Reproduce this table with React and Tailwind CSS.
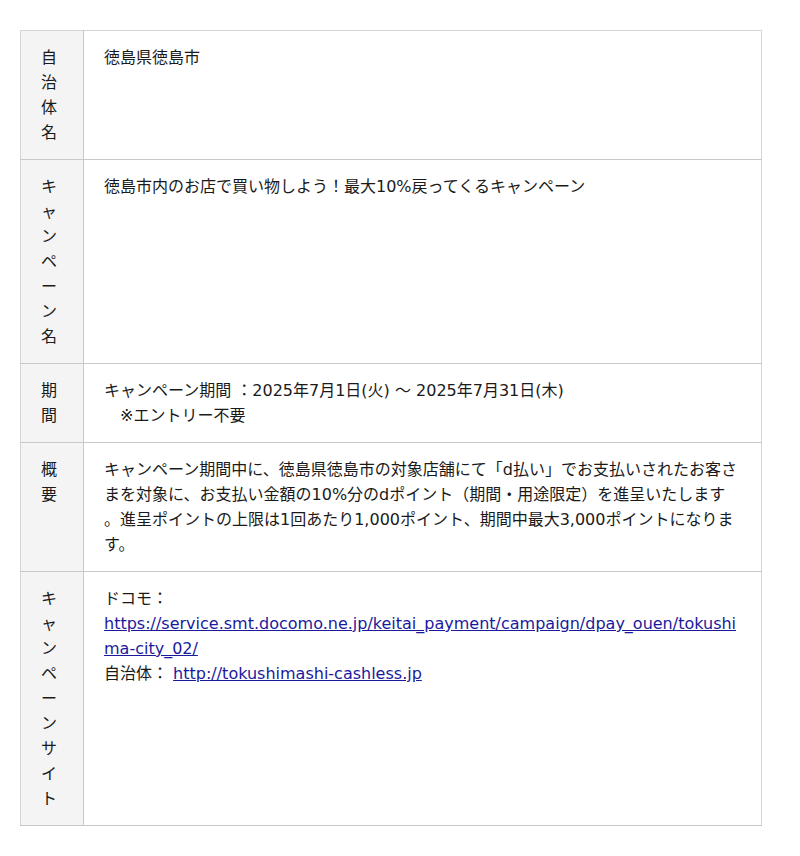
const rows = [
  {
    label: '自治体名',
    body: <>徳島県徳島市</>,
  },
  {
    label: 'キャンペーン名',
    body: <>徳島市内のお店で買い物しよう！最大10%戻ってくるキャンペーン</>,
  },
  {
    label: '期間',
    body: (
      <>
        キャンペーン期間 ：2025年7月1日(火) 〜 2025年7月31日(木)
        <br />
        {'\u3000※エントリー不要'}
      </>
    ),
  },
  {
    label: '概要',
    tight: true,
    body: (
      <>
        キャンペーン期間中に、徳島県徳島市の対象店舗にて「d払い」でお支払いされたお客さまを対象に、お支払い金額の10%分のdポイント（期間・用途限定）を進呈いたします。進呈ポイントの上限は1回あたり1,000ポイント、期間中最大3,000ポイントになります。
      </>
    ),
  },
  {
    label: 'キャンペーンサイト',
    body: (
      <>
        ドコモ：
        <br />
        <a href="#" className="text-[#1a1a9c] underline">
          https://service.smt.docomo.ne.jp/keitai_payment/campaign/dpay_ouen/tokushima-city_02/
        </a>
        <br />
        自治体： <a href="#" className="text-[#1a1a9c] underline">http://tokushimashi-cashless.jp</a>
      </>
    ),
  },
];

export default function App() {
  return (
    <div className="bg-white min-h-[856px] pt-[30px] pl-5 font-['DejaVu_Sans','Noto_Sans_CJK_JP',sans-serif] text-[16px] leading-[25px] text-[#1a1a1a]">
      <table className="w-[742px] border-collapse border border-[#d4d4d4]">
        <tbody>
          {rows.map((row) => (
            <tr key={row.label} className="border-b border-[#c8c8c8]">
              <th className="w-[63px] bg-[#f4f4f4] border-r border-[#c8c8c8] px-5 py-[14px] align-top font-normal text-left break-all">
                {row.label}
              </th>
              <td
                className={
                  row.tight
                    ? 'pl-5 pr-[24px] py-[14px] align-top break-all [line-break:anywhere]'
                    : 'px-5 py-[14px] align-top break-all [line-break:anywhere]'
                }
              >
                {row.body}
              </td>
            </tr>
          ))}
        </tbody>
      </table>
    </div>
  );
}
